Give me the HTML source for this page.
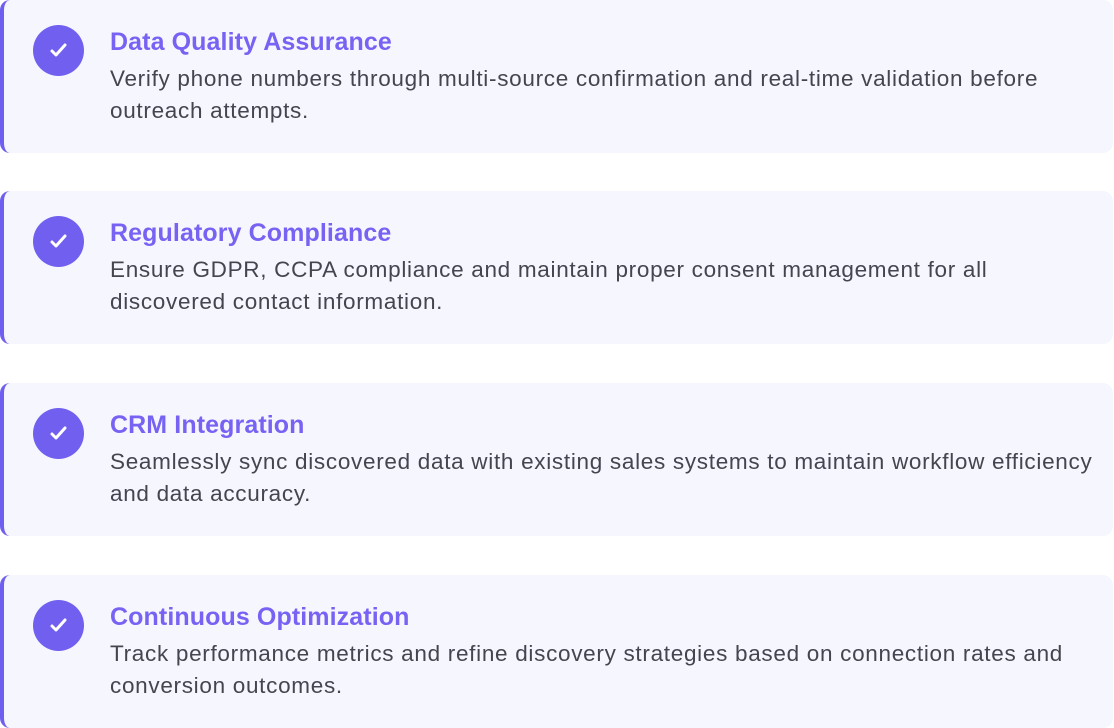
<!DOCTYPE html>
<html><head><style>
body{margin:0;background:#fff;width:1114px;height:728px;overflow:hidden;font-family:"Liberation Sans",sans-serif}
.card{position:absolute;left:0;width:1113px;height:153px;background:#f6f6fe;border-left:4px solid #6f5ff0;border-radius:10px;box-sizing:border-box}
.ic{position:absolute;left:29px;top:25px;width:51px;height:51px;border-radius:50%;background:#7160f0}
.ic svg{position:absolute;left:16px;top:17px}
h3{position:absolute;left:106px;top:28px;margin:0;font-size:25px;font-weight:bold;color:#7763f3;letter-spacing:0.1px;white-space:nowrap}
p{position:absolute;left:106px;top:63px;margin:0;font-size:22.5px;line-height:32px;color:#454550;letter-spacing:0.7px;white-space:nowrap}
</style></head><body>
<div class="card" style="top:0"><div class="ic"><svg width="19" height="17" viewBox="0 0 19 17"><path d="M3 9l4 4 9-10" fill="none" stroke="#fff" stroke-width="3" stroke-linecap="round" stroke-linejoin="round"/></svg></div><h3>Data Quality Assurance</h3><p>Verify phone numbers through multi-source confirmation and real-time validation before<br>outreach attempts.</p></div>
<div class="card" style="top:191px"><div class="ic"><svg width="19" height="17" viewBox="0 0 19 17"><path d="M3 9l4 4 9-10" fill="none" stroke="#fff" stroke-width="3" stroke-linecap="round" stroke-linejoin="round"/></svg></div><h3>Regulatory Compliance</h3><p>Ensure GDPR, CCPA compliance and maintain proper consent management for all<br>discovered contact information.</p></div>
<div class="card" style="top:383px"><div class="ic"><svg width="19" height="17" viewBox="0 0 19 17"><path d="M3 9l4 4 9-10" fill="none" stroke="#fff" stroke-width="3" stroke-linecap="round" stroke-linejoin="round"/></svg></div><h3>CRM Integration</h3><p>Seamlessly sync discovered data with existing sales systems to maintain workflow efficiency<br>and data accuracy.</p></div>
<div class="card" style="top:575px"><div class="ic"><svg width="19" height="17" viewBox="0 0 19 17"><path d="M3 9l4 4 9-10" fill="none" stroke="#fff" stroke-width="3" stroke-linecap="round" stroke-linejoin="round"/></svg></div><h3>Continuous Optimization</h3><p>Track performance metrics and refine discovery strategies based on connection rates and<br>conversion outcomes.</p></div>
</body></html>
